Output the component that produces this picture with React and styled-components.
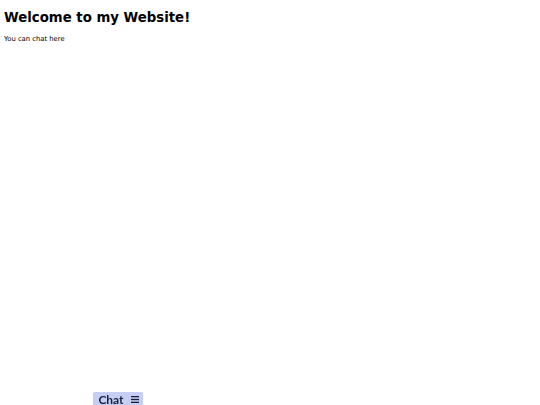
import React from "react";
import styled, { createGlobalStyle } from "styled-components";

const Global = createGlobalStyle`
  body {
    margin: 0;
    font-family: "DejaVu Sans", sans-serif;
    background: #fff;
    color: #000;
  }
`;

const Page = styled.main`
  padding: 9px 4px;
`;

const Title = styled.h1`
  margin: 0;
  font-size: 13.3px;
  font-weight: bold;
  line-height: 17px;
`;

const Note = styled.p`
  margin: 9px 0 0;
  font-size: 6.8px;
  line-height: 9px;
`;

const ChatTab = styled.button`
  position: fixed;
  left: 93px;
  bottom: 0;
  height: 13px;
  width: 50px;
  display: flex;
  align-items: center;
  justify-content: center;
  gap: 7px;
  padding: 1px 0 0 1px;
  border: none;
  border-radius: 2px 2px 0 0;
  background: #c6cef6;
  color: #1b1f3a;
  font-family: Lato, sans-serif;
  font-weight: bold;
  font-size: 12px;
  cursor: pointer;
`;

const Menu = () => (
  <svg width="8" height="7" viewBox="0 0 8 7">
    <rect x="0" y="0" width="8" height="1.3" fill="currentColor" />
    <rect x="0" y="2.85" width="8" height="1.3" fill="currentColor" />
    <rect x="0" y="5.7" width="8" height="1.3" fill="currentColor" />
  </svg>
);

export default function App() {
  return (
    <>
      <Global />
      <Page>
        <Title>Welcome to my Website!</Title>
        <Note>You can chat here</Note>
      </Page>
      <ChatTab>
        Chat <Menu />
      </ChatTab>
    </>
  );
}
